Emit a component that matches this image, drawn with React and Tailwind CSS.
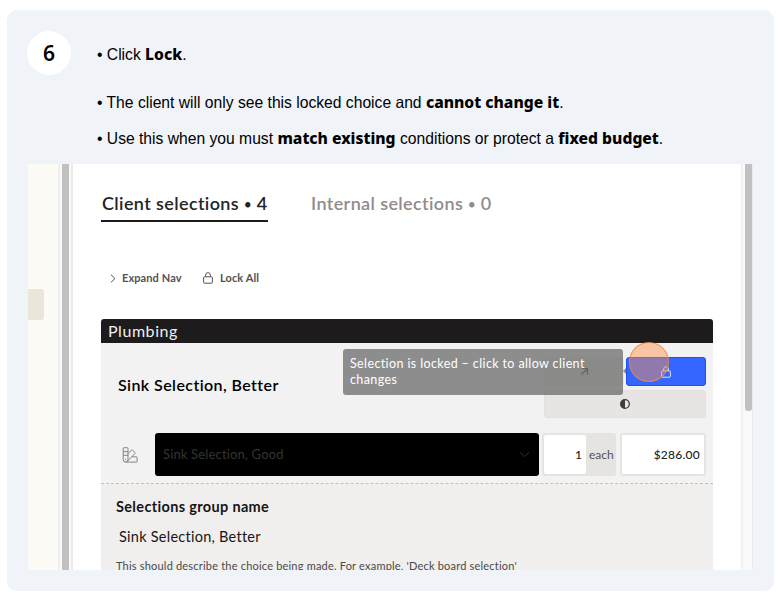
import React from 'react';

const ArrowIcon = () => (
  <svg width="9" height="9" viewBox="0 0 9 9" fill="none" stroke="#4a4848" strokeWidth="1.2">
    <path d="M1.5 7.5L7.5 1.5M1.8 1.5H7.5V7.2" />
  </svg>
);

const LockIcon = ({ color }) => (
  <svg width="10" height="12" viewBox="0 0 10 12" fill="none" stroke={color} strokeWidth="1">
    <rect x="0.6" y="4.8" width="8.8" height="6.4" rx="1" />
    <path d="M2.6 4.8V3.1a2.4 2.4 0 0 1 4.8 0V4.8" />
  </svg>
);

const SwatchIcon = () => (
  <svg width="16" height="16" viewBox="0 0 16 16" fill="none" stroke="#858383" strokeWidth="1" strokeLinejoin="round">
    <path d="M1.2 1.5a.8.8 0 0 1 .8-.8h3.2a.8.8 0 0 1 .8.8v11.2a2.4 2.4 0 0 1-4.8 0zM1.2 4.6h4.8M1.2 8.3h4.8" />
    <path d="M6 6.6L9.4 3.1a.8.8 0 0 1 1.1 0l2.3 2.4a.8.8 0 0 1 0 1.1L5.4 14.3M9.8 9.8h4.5a.8.8 0 0 1 .8.8v3.7a.8.8 0 0 1-.8.8H3.5" />
    <circle cx="3.6" cy="12.4" r="0.3" />
  </svg>
);

const Instructions = () => (
  <div className="flex h-[154px] pl-5">
    <div className="mt-[21px] flex h-11 w-11 shrink-0 items-center justify-center rounded-full bg-white pt-0.5 font-['Noto_Sans'] text-[21px] font-semibold">
      6
    </div>
    <ul className="ml-[26px] whitespace-nowrap text-[15.67px] leading-6 text-black [&_b]:font-['Noto_Sans'] [&_b]:font-extrabold">
      <li className="mt-[32px] h-6">• Click <b>Lock</b>.</li>
      <li className="mt-6 h-6">• The client will only see this locked choice and <b>cannot change it</b>.</li>
      <li className="mt-3 h-6">• Use this when you must <b>match existing</b> conditions or protect a <b>fixed budget</b>.</li>
    </ul>
  </div>
);

const Tabs = () => (
  <div className="flex h-[58px] items-end gap-[43px] text-[18px] font-semibold tracking-[0.38px]">
    <div className="h-[34px] w-[167px] border-b-2 border-[#1d1b1c] pl-px leading-[31px] text-[#262425]">
      Client selections <span className="align-[1px] text-[13px]">•</span> 4
    </div>
    <div className="h-[34px] leading-[31px] text-[#918b8b]">
      Internal selections <span className="align-[1px] text-[13px]">•</span> 0
    </div>
  </div>
);

const Toolbar = () => (
  <div className="mt-[45px] flex h-[22px] items-center text-[11px] font-bold tracking-[0.1px] text-[#555253]">
    <svg className="ml-[9px] mr-[6px]" width="6" height="9" viewBox="0 0 6 9" fill="none" stroke="#555253">
      <path d="M1 .7L5 4.5L1 8.3" />
    </svg>
    <span className="w-[81px]">Expand Nav</span>
    <span className="mr-[7px]"><LockIcon color="#555253" /></span>
    <span>Lock All</span>
  </div>
);

const SelectionItem = () => (
  <div className="relative h-[141px] border-b border-dashed border-[#c3c1bf] bg-[#f2f2f2]">
    <div className="flex h-[90px] justify-between pr-[7px]">
      <h3 className="pl-[17px] pt-[31px] text-[16px] font-semibold leading-[22px] tracking-[0.42px] text-black">Sink Selection, Better</h3>
      <div className="mt-[14px] grid h-[61px] w-[162px] grid-cols-2 grid-rows-[29px_28px] gap-x-0.5 gap-y-1">
        <div className="flex items-center justify-center rounded-[3px] bg-[#e6e5e3]"><ArrowIcon /></div>
        <div className="flex items-center justify-center rounded-[3px] border border-[#1f50ec] bg-[#3566ff]">
          <LockIcon color="#e6e4f2" />
        </div>
        <div className="col-span-2 flex items-center justify-center rounded-[3px] border border-[#e2e1de] bg-[#e6e5e3]">
          <svg width="10" height="10" viewBox="0 0 10 10">
            <circle cx="5" cy="5" r="4.3" fill="#e9e8e7" stroke="#3e3d3d" strokeWidth="1.3" />
            <path d="M5 .5a4.5 4.5 0 0 0 0 9z" fill="#3e3d3d" />
          </svg>
        </div>
      </div>
    </div>

    <div className="flex h-[43px] items-center">
      <div className="ml-[21px] w-[33px]"><SwatchIcon /></div>
      <div className="flex h-[43px] w-[384px] items-center justify-between rounded-[3px] bg-black pl-2 pr-[9px] text-[13px] tracking-[0.16px] text-[#333]">
        <span>Sink Selection, Good</span>
        <svg width="11" height="7" viewBox="0 0 11 7" fill="none" stroke="#333"><path d="M.8 1L5.5 5.7L10.2 1" /></svg>
      </div>
      <div className="ml-[3px] flex h-[43px] w-[74px] rounded-[3px] border-2 border-[#e5e4e1] bg-[#e5e4e1] text-[12px] leading-[39px]">
        <span className="w-[42px] rounded-[2px] bg-white pr-1 text-right font-medium text-[#222]">1</span>
        <span className="ml-[3px] text-[#555253]">each</span>
      </div>
      <div className="ml-[4px] h-[43px] w-[86px] rounded-[3px] border-2 border-[#e5e4e1] bg-white pr-1 text-right text-[12px] font-medium leading-[39px] tracking-[0.25px] text-[#222]">
        $286.00
      </div>
    </div>

    {/* tooltip pointing at the lock button */}
    <div className="absolute left-[242px] top-[6px] h-[46px] w-[280px] rounded-[3px] bg-[#6b6b6b]/75 pl-[7px] pt-[7px] text-[12.5px] leading-4 tracking-[0.38px] text-white">
      Selection is locked – click to allow client<br />changes
    </div>
    <div className="absolute left-[522px] top-[25px] h-0 w-0 border-y-[3px] border-r-[3px] border-y-transparent border-r-[#8b8b8b]" />
    {/* click marker */}
    <div className="absolute left-[528px] top-[-1px] h-10 w-10 rounded-full border-[1.5px] border-[#f28a45]/80 bg-[#ff9146]/45" />
  </div>
);

const GroupDetails = () => (
  <div className="h-[90px] bg-[#f0efed] pl-[15px]">
    <div className="pt-[12px] text-[14.5px] font-bold leading-[22px] tracking-[0.34px] text-[#171616]">Selections group name</div>
    <div className="ml-[3px] mt-2 text-[14.5px] leading-[22px] tracking-[0.26px] text-[#171616]">Sink Selection, Better</div>
    <div className="mt-2 text-[11px] leading-5 tracking-[0.2px] text-[#4b4949]">
      This should describe the choice being made. For example, 'Deck board selection'
    </div>
  </div>
);

export default function App() {
  return (
    <div className="h-[595px] w-[781px] overflow-hidden bg-white pl-[7px] pt-[10px] font-['Liberation_Sans',sans-serif]">
      <div className="h-[581px] w-[767px] rounded-[10px] bg-[#f0f3f8]">
        <Instructions />
        <div className="ml-[21px] flex h-[406px] w-[725px] overflow-hidden whitespace-nowrap bg-white font-['Lato',sans-serif]">
          <div className="w-[30px] shrink-0 bg-[#fcfbf6] pt-[125px]">
            <div className="h-[31px] w-4 rounded-r-[3px] bg-[#ebe6da]" />
          </div>
          <div className="w-[15px] shrink-0 border-l-2 border-r-2 border-l-[#efefed] border-r-[#ecebe6] bg-[#fafafa] pl-0.5">
            <div className="h-full w-[7px] bg-[#c1c1c1]" />
          </div>
          <div className="w-[668px] shrink-0 pl-7">
            <div className="w-[612px]">
              <Tabs />
              <Toolbar />
              <div className="mt-[30px] h-6 rounded-t-[3px] bg-[#1d1b1c] pl-[7px] text-[16px] leading-[23px] tracking-[0.55px] text-[#f1f0f0]">Plumbing</div>
              <SelectionItem />
              <GroupDetails />
            </div>
          </div>
          <div className="w-3 shrink-0 border-l-2 border-r border-l-[#f1f1f1] border-r-[#ebebeb] bg-[#fafafa] pl-0.5">
            <div className="h-[247px] w-[7px] rounded-b-[3px] bg-[#c1c1c1]" />
          </div>
        </div>
      </div>
    </div>
  );
}
